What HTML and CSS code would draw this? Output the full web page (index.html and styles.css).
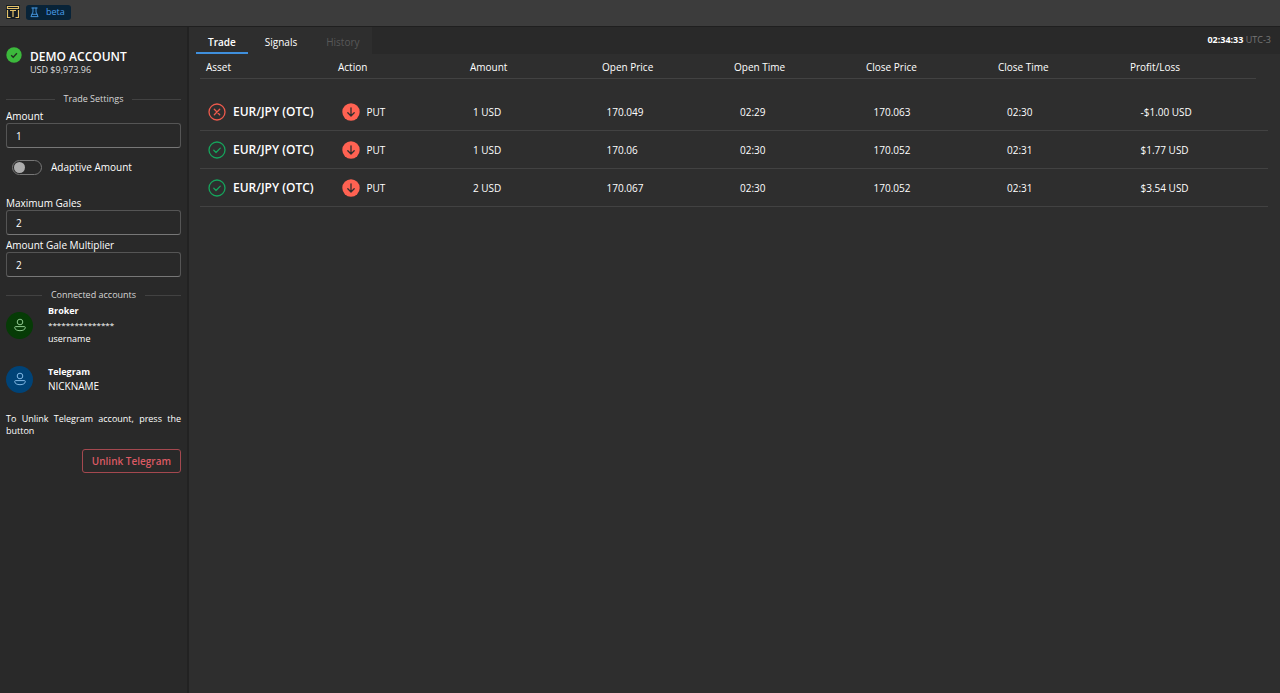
FILE: index.html
```html
<!DOCTYPE html>
<html lang="en">
<head>
  <meta charset="UTF-8">
  <meta name="viewport" content="width=device-width, initial-scale=1.0">
  <title>Trader beta</title>
  <link rel="stylesheet" href="styles.css">
</head>
<body>

<!-- shared icons -->
<svg class="sprite" aria-hidden="true">
  <symbol id="icon-user" viewBox="0 0 14 14">
    <g fill="none" stroke="currentColor" stroke-width="1">
      <circle cx="7" cy="4" r="2.8"/>
      <path d="M2.6 8.6h8.800a.9.9 0 0 1 .9.9c0 2-2.300 3.200-5.300 3.200S1.700 11.500 1.700 9.500a.9.9 0 0 1 .9-.9z"/>
    </g>
  </symbol>
  <symbol id="icon-loss" viewBox="0 0 18 18">
    <g fill="none" stroke="currentColor" stroke-width="1.3" stroke-linecap="round">
      <circle cx="9" cy="9" r="8"/>
      <path d="M6.300 6.300l5.400 5.400M11.700 6.300l-5.400 5.400"/>
    </g>
  </symbol>
  <symbol id="icon-win" viewBox="0 0 18 18">
    <g fill="none" stroke="currentColor" stroke-width="1.3" stroke-linecap="round" stroke-linejoin="round">
      <circle cx="9" cy="9" r="8"/>
      <path d="M5.800 9.300l2.200 2.200 4.300-4.400"/>
    </g>
  </symbol>
  <symbol id="icon-put" viewBox="0 0 18 18">
    <circle cx="9" cy="9" r="8.700" fill="#ff6252"/>
    <path d="M9 4.800v8M5.800 9.800L9 13l3.200-3.200" fill="none" stroke="#2e2e2e" stroke-width="1.3" stroke-linecap="round" stroke-linejoin="round"/>
  </symbol>
</svg>

<header class="topbar">
  <svg class="logo" viewBox="0 0 14 14" aria-hidden="true">
    <rect width="14" height="14" rx="1" fill="#141c24"/>
    <path d="M1.500 1.500h11v2h-11zM4 5.500h6M7 5.500v6.500M1.500 5v7.500h3M12.500 5v7.500h-3" fill="none" stroke="#e3c069" stroke-width="1.2"/>
  </svg>
  <span class="badge">
    <svg class="badge-icon" viewBox="0 0 10 12" aria-hidden="true">
      <path d="M2 1h6M3.300 1v4.500L1 10.600h8L6.700 5.500V1M2.200 8h5.600" fill="none" stroke="#4a9eea" stroke-width="1" stroke-linecap="round" stroke-linejoin="round"/>
    </svg>
    beta
  </span>
</header>

<div class="layout">
  <aside class="sidebar">
    <div class="account">
      <svg class="account-icon" viewBox="0 0 16 16" aria-hidden="true">
        <circle cx="8" cy="8" r="7.700" fill="#3cb93c"/>
        <path d="M5.200 8.300l2 1.900 3.700-3.900" fill="none" stroke="#20301f" stroke-width="1.400"/>
      </svg>
      <div>
        <h1 class="account-name">DEMO ACCOUNT</h1>
        <div class="account-balance">USD $9,973.96</div>
      </div>
    </div>

    <h2 class="divider">Trade Settings</h2>
    <form class="settings">
      <label for="amount">Amount</label>
      <input class="field" type="text" id="amount" value="1">
      <div class="switch-row">
        <input class="switch" type="checkbox" id="adaptive">
        <label for="adaptive">Adaptive Amount</label>
      </div>
      <label for="gales">Maximum Gales</label>
      <input class="field" type="text" id="gales" value="2">
      <label for="multiplier">Amount Gale Multiplier</label>
      <input class="field" type="text" id="multiplier" value="2">
    </form>

    <h2 class="divider">Connected accounts</h2>
    <div class="connected">
      <div class="avatar broker"><svg><use href="#icon-user"/></svg></div>
      <div class="connected-text">
        <strong>Broker</strong>
        <span class="masked">***************</span>
        <span>username</span>
      </div>
    </div>
    <div class="connected">
      <div class="avatar telegram"><svg><use href="#icon-user"/></svg></div>
      <div class="connected-text">
        <strong>Telegram</strong>
        <span class="nickname">NICKNAME</span>
      </div>
    </div>

    <p class="hint">To Unlink Telegram account, press the button</p>
    <button class="unlink" type="button">Unlink Telegram</button>
  </aside>

  <main class="content">
    <div class="tabbar">
      <div class="tabs" role="tablist">
        <button class="tab active" type="button" role="tab" aria-selected="true">Trade</button>
        <button class="tab" type="button" role="tab">Signals</button>
        <button class="tab" type="button" role="tab" disabled>History</button>
      </div>
      <div class="clock"><b>02:34:33</b> UTC-3</div>
    </div>

    <table class="trades">
      <thead>
        <tr>
          <th>Asset</th>
          <th>Action</th>
          <th>Amount</th>
          <th>Open Price</th>
          <th>Open Time</th>
          <th>Close Price</th>
          <th>Close Time</th>
          <th>Profit/Loss</th>
        </tr>
      </thead>
      <tbody>
        <tr>
          <td><div class="cell asset"><svg class="loss"><use href="#icon-loss"/></svg>EUR/JPY (OTC)</div></td>
          <td><div class="cell"><svg><use href="#icon-put"/></svg>PUT</div></td>
          <td>1 USD</td>
          <td>170.049</td>
          <td>02:29</td>
          <td>170.063</td>
          <td>02:30</td>
          <td>-$1.00 USD</td>
        </tr>
        <tr>
          <td><div class="cell asset"><svg class="win"><use href="#icon-win"/></svg>EUR/JPY (OTC)</div></td>
          <td><div class="cell"><svg><use href="#icon-put"/></svg>PUT</div></td>
          <td>1 USD</td>
          <td>170.06</td>
          <td>02:30</td>
          <td>170.052</td>
          <td>02:31</td>
          <td>$1.77 USD</td>
        </tr>
        <tr>
          <td><div class="cell asset"><svg class="win"><use href="#icon-win"/></svg>EUR/JPY (OTC)</div></td>
          <td><div class="cell"><svg><use href="#icon-put"/></svg>PUT</div></td>
          <td>2 USD</td>
          <td>170.067</td>
          <td>02:30</td>
          <td>170.052</td>
          <td>02:31</td>
          <td>$3.54 USD</td>
        </tr>
      </tbody>
    </table>
  </main>
</div>

</body>
</html>
```
FILE: styles.css
```css
* {
  box-sizing: border-box;
}

body {
  display: flex;
  flex-direction: column;
  min-height: 100vh;
  margin: 0;
  background-color: #2e2e2e;
  color: #fff;
  font-family: "Open Sans", "Noto Sans", sans-serif;
  font-size: 10px;
  line-height: 14px;
}

button, input {
  font-family: inherit;
  color: inherit;
}

.sprite {
  display: none;
}

/* top bar */
.topbar {
  display: flex;
  align-items: center;
  gap: 6px;
  height: 27px;
  padding: 0 6px 2px;
  background-color: #3c3c3c;
  border-bottom: 1px solid #1f1f1f;
}

.logo {
  width: 14px;
  height: 14px;
}

.badge {
  display: flex;
  align-items: center;
  gap: 7px;
  height: 15px;
  padding: 0 6px 0 4px;
  border-radius: 3px;
  background-color: #082338;
  color: #4a9eea;
  font-size: 9px;
}

.badge-icon {
  width: 9px;
  height: 11px;
}

.layout {
  display: flex;
  flex: 1;
}

/* sidebar */
.sidebar {
  display: flex;
  flex-direction: column;
  flex: none;
  width: 189px;
  padding: 20px 6px 6px;
  border-right: 2px solid #222;
  background-color: #292929;
}

.account {
  display: flex;
  gap: 8px;
  margin-bottom: 16px;
}

.account-icon {
  width: 16px;
  height: 16px;
}

.account-name {
  margin: 3px 0 0;
  font-size: 12px;
  font-weight: 600;
  line-height: 14px;
}

.account-balance {
  font-size: 9px;
  line-height: 12px;
  color: #ddd;
}

.divider {
  display: flex;
  align-items: center;
  gap: 9px;
  margin: 0;
  color: #d6d6d6;
  font-size: 9px;
  font-weight: normal;
  line-height: 14px;
}

.divider::before,
.divider::after {
  content: "";
  flex: 1;
  border-top: 1px solid #424242;
}

.settings {
  display: flex;
  flex-direction: column;
  padding: 4px 0 7px;
}

.settings label {
  line-height: 13px;
}

.field {
  width: 100%;
  height: 25px;
  margin-bottom: 4px;
  padding: 0 9px;
  border: 1px solid #555;
  border-bottom-color: #777;
  border-radius: 3px;
  background-color: #292929;
  font-size: 10px;
}

.switch-row {
  display: flex;
  align-items: center;
  gap: 9px;
  margin: 8px 0 22px;
  padding-left: 6px;
}

.switch {
  appearance: none;
  display: flex;
  align-items: center;
  width: 30px;
  height: 15px;
  margin: 0;
  padding: 0 1px;
  border: 1px solid #777;
  border-radius: 8px;
}

.switch::before {
  content: "";
  width: 11px;
  height: 11px;
  border-radius: 50%;
  background-color: #adadad;
}

.connected {
  display: flex;
  align-items: center;
  gap: 15px;
  min-height: 46px;
  margin-bottom: 8px;
}

.avatar {
  display: flex;
  align-items: center;
  justify-content: center;
  width: 27px;
  height: 27px;
  border-radius: 50%;
}

.avatar svg {
  width: 14px;
  height: 14px;
}

.broker {
  background-color: #063b06;
  color: #8fc98f;
}

.telegram {
  background-color: #004377;
  color: #82b9e6;
}

.connected-text {
  display: flex;
  flex-direction: column;
  font-size: 9px;
}

.masked {
  font-size: 8px;
}

.nickname {
  font-size: 10px;
}

.hint {
  margin: 3px 0 12px;
  font-size: 9px;
  line-height: 12px;
  text-align: justify;
}

.unlink {
  align-self: flex-end;
  height: 24px;
  padding: 0 9px;
  border: 1px solid #a4484f;
  border-radius: 3px;
  background: none;
  color: #dc5a64;
  font-size: 10px;
  font-weight: 600;
}

/* content */
.content {
  flex: 1;
}

.tabbar {
  display: flex;
  align-items: center;
  justify-content: space-between;
  padding-right: 9px;
  background-color: #292929;
}

.tabs {
  display: flex;
  gap: 5px;
  height: 27px;
  padding-left: 7px;
  background-color: #2e2e2e;
}

.tab {
  padding: 6px 12px 2px;
  border: 0;
  border-bottom: 2px solid transparent;
  background: none;
  font-size: 10px;
}

.tab.active {
  border-bottom-color: #3f8fdc;
  font-weight: 600;
}

.tab:disabled {
  color: #585858;
}

.clock {
  padding-bottom: 2px;
  color: #777;
  font-size: 9px;
}

.clock b {
  color: #fff;
}

.trades {
  display: block;
  margin: 0 12px 0 11px;
}

.trades thead {
  display: block;
  margin-bottom: 14px;
  padding-right: 12px;
}

.trades tr {
  display: grid;
  grid-template-columns: repeat(8, 1fr);
  align-items: center;
  border-bottom: 1px solid #424242;
}

.trades tbody {
  display: block;
}

.trades th {
  padding: 6px 6px 4px;
  font-weight: normal;
  text-align: left;
}

.trades td {
  padding: 9px 6px;
}

.trades tbody tr {
  height: 38px;
}

.cell {
  display: flex;
  align-items: center;
  gap: 7px;
  padding-left: 2px;
}

.cell svg {
  width: 18px;
  height: 18px;
}

.asset {
  font-size: 12px;
  font-weight: 600;
}

.loss {
  color: #ee5a4c;
}

.win {
  color: #16a45c;
}
```
